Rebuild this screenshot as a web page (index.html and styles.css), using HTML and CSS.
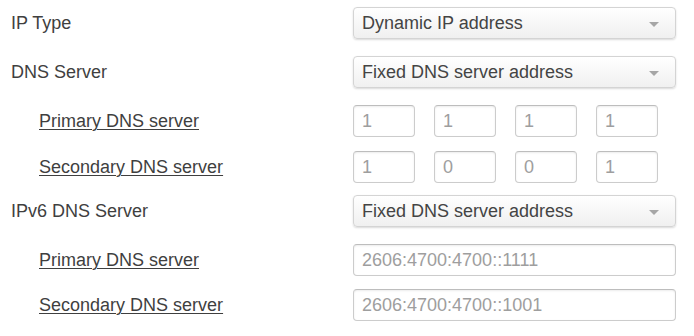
FILE: index.html
```html
<!DOCTYPE html>
<html>
<head>
<meta charset="utf-8">
<link rel="stylesheet" href="styles.css">
</head>
<body>
<div class="form">
  <div class="row r1">
    <div class="label">IP Type</div>
    <div class="select"><span>Dynamic IP address</span><i class="arrow"></i></div>
  </div>
  <div class="row r2">
    <div class="label">DNS Server</div>
    <div class="select"><span>Fixed DNS server address</span><i class="arrow"></i></div>
  </div>
  <div class="row r3">
    <div class="label sub"><u>Primary DNS server</u></div>
    <div class="octets">
      <div class="input small">1</div>
      <div class="input small">1</div>
      <div class="input small">1</div>
      <div class="input small">1</div>
    </div>
  </div>
  <div class="row r4">
    <div class="label sub"><u>Secondary DNS server</u></div>
    <div class="octets">
      <div class="input small">1</div>
      <div class="input small">0</div>
      <div class="input small">0</div>
      <div class="input small">1</div>
    </div>
  </div>
  <div class="row r5">
    <div class="label">IPv6 DNS Server</div>
    <div class="select"><span>Fixed DNS server address</span><i class="arrow"></i></div>
  </div>
  <div class="row r6">
    <div class="label sub"><u>Primary DNS server</u></div>
    <div class="input wide">2606:4700:4700::1111</div>
  </div>
  <div class="row r7">
    <div class="label sub"><u>Secondary DNS server</u></div>
    <div class="input wide">2606:4700:4700::1001</div>
  </div>
</div>
</body>
</html>
```

FILE: styles.css
```css
html, body {
  margin: 0;
  padding: 0;
  background: #ffffff;
}
body {
  font-family: "Liberation Sans", Arial, sans-serif;
  font-size: 18px;
  color: #3f3f3f;
  width: 694px;
  height: 336px;
  overflow: hidden;
}
.form {
  display: flex;
  flex-direction: column;
  padding-left: 11px;
}
.row {
  display: grid;
  grid-template-columns: 342px 323px;
  align-items: center;
  height: 32px;
}
.r1 { margin-top: 7px; }
.r2 { margin-top: 17px; }
.r3 { margin-top: 17px; }
.r4 { margin-top: 14px; }
.r5 { margin-top: 12px; }
.r6 { margin-top: 17px; }
.r7 { margin-top: 13px; }
.label {
  color: #3f3f3f;
  white-space: nowrap;
  line-height: 20px;
}
.label.sub {
  padding-left: 28px;
}
.label u {
  text-decoration: underline;
  text-underline-offset: 2px;
  text-decoration-thickness: 1px;
}
.select {
  position: relative;
  height: 32px;
  box-sizing: border-box;
  border: 1px solid #d4d4d4;
  border-radius: 4px;
  background: linear-gradient(#ffffff, #f0f0f0);
  box-shadow: 0 1px 2px rgba(0,0,0,0.15);
  display: flex;
  align-items: center;
  padding-left: 8px;
  color: #444;
}
.arrow {
  position: absolute;
  right: 16px;
  top: 14px;
  width: 0;
  height: 0;
  border-left: 5px solid transparent;
  border-right: 5px solid transparent;
  border-top: 5px solid #a6a6a6;
}
.octets {
  display: flex;
  gap: 19px;
}
.input {
  height: 32px;
  box-sizing: border-box;
  border: 1px solid #cccccc;
  border-top-color: #bdbdbd;
  border-radius: 4px;
  box-shadow: inset 0 1px 2px rgba(0,0,0,0.08);
  background: #fff;
  color: #9e9e9e;
  font-size: 18px;
  display: flex;
  align-items: center;
  padding-left: 8px;
}
.input.small {
  width: 62px;
}
.input.wide {
  width: 323px;
}
```
